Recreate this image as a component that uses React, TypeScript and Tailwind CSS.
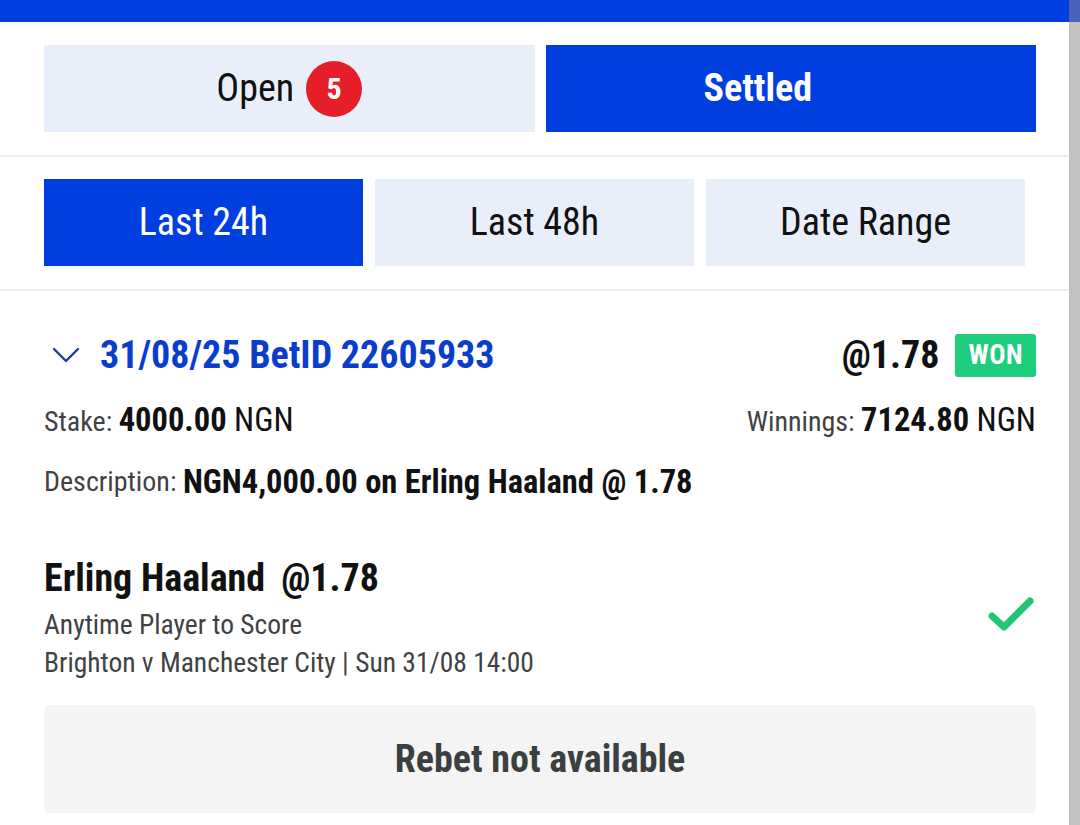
import React from 'react';

const BLUE = 'bg-[#003ee0]';

function Chevron() {
  return (
    <svg width="28" height="18" viewBox="0 0 28 18" className="shrink-0">
      <path d="M2 3 L14 15 L26 3" fill="none" stroke="#1d3b9c" strokeWidth="2.4" strokeLinecap="round" strokeLinejoin="round" />
    </svg>
  );
}

function Check() {
  return (
    <svg width="46" height="36" viewBox="0 0 46 36">
      <path d="M4 20 L16 31 L42 5" fill="none" stroke="#22c774" strokeWidth="7" strokeLinecap="round" strokeLinejoin="round" />
    </svg>
  );
}

export default function App() {
  const filters = ['Last 24h', 'Last 48h', 'Date Range'];

  return (
    <div className="w-[1080px] h-[825px] flex bg-white overflow-hidden font-['Roboto_Condensed','Liberation_Sans_Narrow',Roboto,sans-serif] text-[#111]">
      <div className="flex-1 flex flex-col">
        <div className={`h-[22px] ${BLUE}`} />

        {/* open / settled */}
        <div className="grid grid-cols-2 gap-[11px] pl-[44px] pr-[33px] pt-[23px] pb-[23px]">
          <button className="h-[87px] bg-[#e9effa] flex items-center justify-center gap-[12px] text-[38px] text-[#111]">
            <span>Open</span>
            <span className="w-[56px] h-[56px] rounded-full bg-[#e51e29] text-white text-[30px] font-bold flex items-center justify-center">5</span>
          </button>
          <button className={`h-[87px] ${BLUE} text-white text-[38px] font-bold flex items-center justify-center`}>
            <span className="pr-[66px]">Settled</span>
          </button>
        </div>
        <div className="h-[2px] bg-[#e9eef2]" />

        {/* time filters */}
        <div className="grid grid-cols-3 gap-[12px] px-[44px] pt-[22px] pb-[23px]">
          {filters.map((f, i) => (
            <button
              key={f}
              className={`h-[87px] flex items-center justify-center text-[38px] ${i === 0 ? `${BLUE} text-white` : 'bg-[#e9effa] text-[#111]'}`}
            >
              {f}
            </button>
          ))}
        </div>
        <div className="h-[2px] bg-[#e9eef2]" />

        {/* bet card */}
        <div className="pl-[44px] pr-[33px] flex flex-col">
          <div className="mt-[40px] h-[48px] flex items-center justify-between">
            <div className="flex items-center gap-[20px] pl-[8px]">
              <Chevron />
              <span className="text-[38px] font-bold text-[#0a3dcc] leading-none">31/08/25 BetID 22605933</span>
            </div>
            <div className="flex items-center gap-[16px]">
              <span className="text-[38px] font-bold leading-none">@1.78</span>
              <span className="h-[43px] px-[13px] rounded-[3px] bg-[#1ecd7b] text-white text-[27px] tracking-[0.5px] font-bold flex items-center">WON</span>
            </div>
          </div>

          <div className="mt-[23px] h-[36px] flex items-center justify-between text-[32.5px]">
            <div>
              <span className="text-[28px] text-[#3f4244]">Stake: </span>
              <span className="font-bold">4000.00</span>
              <span> NGN</span>
            </div>
            <div>
              <span className="text-[28px] text-[#3f4244]">Winnings: </span>
              <span className="font-bold">7124.80</span>
              <span> NGN</span>
            </div>
          </div>

          <div className="mt-[26px] h-[36px] flex items-center text-[32.5px]">
            <span className="text-[28px] text-[#3f4244]">Description:&nbsp;</span>
            <span className="font-bold">NGN4,000.00 on Erling Haaland @ 1.78</span>
          </div>

          <div className="mt-[56px] flex items-start justify-between">
            <div className="flex flex-col">
              <div className="h-[44px] flex items-center text-[38px] font-bold gap-[16px]">
                <span>Erling Haaland</span>
                <span>@1.78</span>
              </div>
              <div className="mt-[9px] h-[32px] flex items-center text-[27.5px] text-[#3f4244]">Anytime Player to Score</div>
              <div className="mt-[6px] h-[32px] flex items-center text-[27.5px] text-[#3f4244]">Brighton v Manchester City | Sun 31/08 14:00</div>
            </div>
            <div className="pr-[2px] mt-[40px]">
              <Check />
            </div>
          </div>

          <div className="mt-[26px] h-[108px] rounded-[5px] bg-[#f4f4f4] flex items-center justify-center text-[38px] font-bold text-[#3a3f40]">
            Rebet not available
          </div>
        </div>
      </div>

      <div className="w-[11px] flex flex-col">
        <div className="h-[22px] bg-[#4a62b9]" />
        <div className="flex-1 bg-[#c1c1c1]" />
      </div>
    </div>
  );
}
